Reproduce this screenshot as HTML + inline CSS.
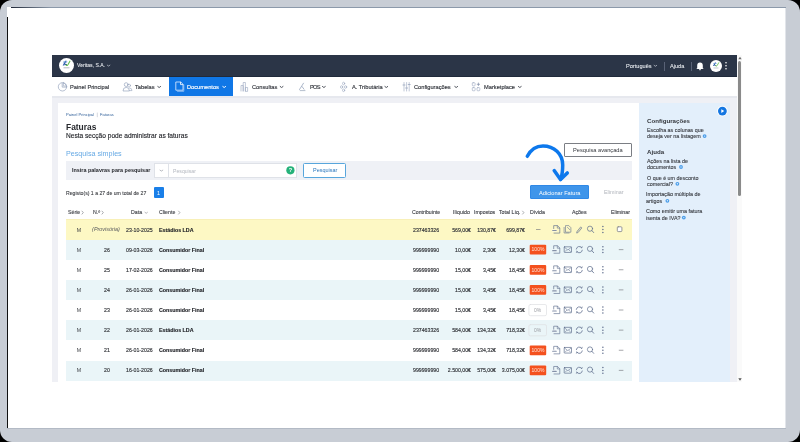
<!DOCTYPE html>
<html><head><meta charset="utf-8">
<style>
*{margin:0;padding:0;box-sizing:border-box}
html,body{width:800px;height:442px;overflow:hidden;background:#000}
body{font-family:"Liberation Sans",sans-serif;position:relative}
.a{position:absolute;white-space:nowrap}
.t{line-height:1;will-change:transform}
svg{position:absolute;left:0;top:0}
</style></head><body>
<div class="a" style="left:0;top:0;width:800px;height:442px;background:#c8cdd5;border-radius:12px"></div>
<div class="a" style="left:7px;top:7px;width:779px;height:422px;background:#fff;border-bottom:1px solid #b3bac5"></div>
<div class="a" style="left:7px;top:17px;width:1px;height:411px;background:#111"></div>
<div class="a" style="left:11px;top:7px;width:775px;height:1px;background:linear-gradient(90deg,#222a3a,#8c99aa 40px)"></div>
<div class="a" style="left:785px;top:8px;width:1px;height:420px;background:#e2e5ea"></div>
<div class="a" style="left:52px;top:55px;width:685px;height:22px;background:#2b3547"></div>
<div class="a" style="left:52px;top:76px;width:685px;height:1px;background:#202a3b"></div>
<div class="a" style="left:52px;top:77px;width:685px;height:19px;background:#fff"></div>
<div class="a" style="left:52px;top:96px;width:685px;height:286px;background:#eff0f5"></div>
<div class="a" style="left:52px;top:96px;width:685px;height:2px;background:#e6e8ee"></div>
<div class="a" style="left:58px;top:103px;width:581px;height:279px;background:#fff"></div>
<div class="a" style="left:639px;top:103px;width:91px;height:279px;background:#e3effb"></div>
<div class="a" style="left:737px;top:55px;width:5px;height:327px;background:#fafafa"></div>
<div class="a" style="left:738px;top:61px;width:3px;height:135px;background:#8a8a8a;border-radius:2px"></div>
<!-- nav active -->
<div class="a" style="left:169px;top:77px;width:64px;height:19px;background:#1077e6"></div>
<!-- header circles -->
<div class="a" style="left:59px;top:57.7px;width:15px;height:15px;border-radius:50%;background:#fff"></div>
<div class="a" style="left:710px;top:60px;width:12px;height:12px;border-radius:50%;background:#fff"></div>
<div class="a" style="left:663.5px;top:61.5px;width:1px;height:9px;background:#596276"></div>
<div class="a" style="left:690.5px;top:61.5px;width:1px;height:9px;background:#596276"></div>
<!-- search bar -->
<div class="a" style="left:66px;top:161px;width:566px;height:18.7px;background:#eff1f6"></div>
<div class="a" style="left:154.4px;top:163.4px;width:14px;height:14.2px;background:#fff;border:1px solid #dfe2e8;border-right:none"></div>
<div class="a" style="left:168.4px;top:163.4px;width:129px;height:14.2px;background:#fff;border:1px solid #dfe2e8"></div>
<div class="a" style="left:303px;top:163.2px;width:43.3px;height:14.5px;background:#fff;border:1px solid #58a6dc;border-radius:1.5px"></div>
<div class="a" style="left:564.3px;top:143.1px;width:67.8px;height:14.3px;background:#fff;border:1px solid #7b7e84;border-radius:1px"></div>
<div class="a" style="left:153.5px;top:187.4px;width:10.3px;height:11.1px;background:#1a7fe8;border-radius:1px"></div>
<div class="a" style="left:530px;top:185.4px;width:59px;height:13.8px;background:#3f95ea;border:1px solid #2f88e6;border-radius:1px"></div>
<!-- table rows -->
<div class="a" style="left:66px;top:219px;width:566px;height:20.5px;background:#fdf8c4;border-top:1px solid #f8f0b8"></div>
<div class="a" style="left:66px;top:239.5px;width:566px;height:20.1px;background:#eaf5f8"></div>
<div class="a" style="left:66px;top:280px;width:566px;height:20.1px;background:#eaf5f8"></div>
<div class="a" style="left:66px;top:320.2px;width:566px;height:20.1px;background:#eaf5f8"></div>
<div class="a" style="left:66px;top:360.5px;width:566px;height:20.1px;background:#eaf5f8"></div>

<div class="a t" id="h1" style="left:76.60px;top:63.10px;font-size:5.133px;color:#eef1f5;-webkit-text-stroke:0.05px #eef1f5">Veritas, S.A.</div>
<div class="a t" id="h2" style="left:625.60px;top:64.17px;font-size:5.617px;color:#eef1f5;-webkit-text-stroke:0.05px #eef1f5">Português</div>
<div class="a t" id="h3" style="left:669.70px;top:64.17px;font-size:5.617px;color:#eef1f5;-webkit-text-stroke:0.05px #eef1f5">Ajuda</div>
<div class="a t" id="n1" style="left:70.20px;top:84.73px;font-size:5.696px;color:#33363d;-webkit-text-stroke:0.15px #33363d">Painel Principal</div>
<div class="a t" id="n2" style="left:135.00px;top:84.73px;font-size:5.696px;color:#33363d;-webkit-text-stroke:0.15px #33363d">Tabelas</div>
<div class="a t" id="n3" style="left:187.00px;top:84.73px;font-size:5.696px;color:#fff;-webkit-text-stroke:0.15px #fff">Documentos</div>
<div class="a t" id="n4" style="left:251.90px;top:84.73px;font-size:5.696px;color:#33363d;-webkit-text-stroke:0.15px #33363d">Consultas</div>
<div class="a t" id="n5" style="left:309.60px;top:84.73px;font-size:5.696px;color:#33363d;-webkit-text-stroke:0.15px #33363d;letter-spacing:-0.75px">POS</div>
<div class="a t" id="n6" style="left:351.60px;top:84.73px;font-size:5.696px;color:#33363d;-webkit-text-stroke:0.15px #33363d">A. Tributária</div>
<div class="a t" id="n7" style="left:414.30px;top:84.73px;font-size:5.696px;color:#33363d;-webkit-text-stroke:0.15px #33363d">Configurações</div>
<div class="a t" id="n8" style="left:484.00px;top:84.73px;font-size:5.696px;color:#33363d;-webkit-text-stroke:0.15px #33363d">Marketplace</div>
<div class="a t" id="b1" style="left:66.10px;top:112.72px;font-size:4.079px;color:#2f5f99">Painel Principal</div>
<div class="a t" id="b2" style="left:100.30px;top:112.73px;font-size:4.052px;color:#2f5f99">Faturas</div>
<div class="a t" id="t1" style="left:66.10px;top:122.71px;font-size:8.404px;color:#26282d;font-weight:bold">Faturas</div>
<div class="a t" id="t2" style="left:66.10px;top:133.49px;font-size:6.606px;color:#202227;-webkit-text-stroke:0.12px #202227">Nesta secção pode administrar as faturas</div>
<div class="a t" id="ps" style="left:66.40px;top:150.71px;font-size:7.169px;color:#66a9e4">Pesquisa simples</div>
<div class="a t" id="s1" style="left:71.90px;top:168.45px;font-size:5.446px;color:#25272c;font-weight:bold">Insira palavras para pesquisar</div>
<div class="a t" id="s2" style="left:173.10px;top:168.59px;font-size:5.165px;color:#b3b7bf">Pesquisar</div>
<div class="a t" id="s3" style="left:312.70px;top:168.43px;font-size:5.488px;color:#2a76bd">Pesquisar</div>
<div class="a t" id="pa" style="left:573.20px;top:148.43px;font-size:5.695px;color:#33363c">Pesquisa avançada</div>
<div class="a t" id="rg" style="left:65.90px;top:191.19px;font-size:5.150px;color:#3e4045;-webkit-text-stroke:0.1px #3e4045">Registo(s) 1 a 27 de um total de 27</div>
<div class="a t" id="pg" style="left:157.30px;top:191.07px;font-size:5.404px;color:#fff">1</div>
<div class="a t" id="af" style="left:539.00px;top:190.64px;font-size:5.679px;color:#fff">Adicionar Fatura</div>
<div class="a t" id="el" style="left:603.70px;top:190.37px;font-size:5.409px;color:#b0b4bb">Eliminar</div>
<div class="a t" id="th1" style="left:67.50px;top:210.35px;font-size:5.241px;color:#3c3e44;-webkit-text-stroke:0.12px #3c3e44">Série</div>
<div class="a t" id="th2" style="left:92.70px;top:210.35px;font-size:5.241px;color:#3c3e44;-webkit-text-stroke:0.12px #3c3e44">N.º</div>
<div class="a t" id="th3" style="left:131.00px;top:210.35px;font-size:5.241px;color:#3c3e44;-webkit-text-stroke:0.12px #3c3e44">Data</div>
<div class="a t" id="th4" style="left:159.00px;top:210.35px;font-size:5.241px;color:#3c3e44;-webkit-text-stroke:0.12px #3c3e44">Cliente</div>
<div class="a t" id="th5" style="left:411.70px;top:210.35px;font-size:5.241px;color:#3c3e44;-webkit-text-stroke:0.12px #3c3e44">Contribuinte</div>
<div class="a t" id="th6" style="left:453.10px;top:210.35px;font-size:5.241px;color:#3c3e44;-webkit-text-stroke:0.12px #3c3e44">Ilíquido</div>
<div class="a t" id="th7" style="left:473.80px;top:210.35px;font-size:5.241px;color:#3c3e44;-webkit-text-stroke:0.12px #3c3e44">Impostos</div>
<div class="a t" id="th8" style="left:499.00px;top:210.35px;font-size:5.241px;color:#3c3e44;-webkit-text-stroke:0.12px #3c3e44">Total Líq.</div>
<div class="a t" id="th9" style="left:529.80px;top:210.35px;font-size:5.241px;color:#3c3e44;-webkit-text-stroke:0.12px #3c3e44">Dívida</div>
<div class="a t" id="th10" style="left:572.30px;top:210.35px;font-size:5.241px;color:#3c3e44;-webkit-text-stroke:0.12px #3c3e44">Ações</div>
<div class="a t" id="th11" style="left:611.30px;top:210.35px;font-size:5.241px;color:#3c3e44;-webkit-text-stroke:0.12px #3c3e44">Eliminar</div>
<div class="a t" id="c1" style="left:646.80px;top:117.66px;font-size:6.154px;color:#33363c;font-weight:bold">Configurações</div>
<div class="a t" id="c2" style="left:646.50px;top:128.48px;font-size:5.383px;color:#35383e;-webkit-text-stroke:0.1px #35383e">Escolha as colunas que</div>
<div class="a t" id="c3" style="left:646.50px;top:134.38px;font-size:5.383px;color:#35383e;-webkit-text-stroke:0.1px #35383e">deseja ver na listagem</div>
<div class="a t" id="a1" style="left:646.60px;top:148.81px;font-size:6.154px;color:#33363c;font-weight:bold">Ajuda</div>
<div class="a t" id="a2" style="left:646.50px;top:159.08px;font-size:5.383px;color:#35383e;-webkit-text-stroke:0.1px #35383e">Ações na lista de</div>
<div class="a t" id="a3" style="left:646.50px;top:165.28px;font-size:5.383px;color:#35383e;-webkit-text-stroke:0.1px #35383e">documentos</div>
<div class="a t" id="a4" style="left:646.50px;top:175.88px;font-size:5.383px;color:#35383e;-webkit-text-stroke:0.1px #35383e">O que é um desconto</div>
<div class="a t" id="a5" style="left:646.50px;top:182.08px;font-size:5.383px;color:#35383e;-webkit-text-stroke:0.1px #35383e">comercial?</div>
<div class="a t" id="a6" style="left:646.40px;top:192.38px;font-size:5.383px;color:#35383e;-webkit-text-stroke:0.1px #35383e">Importação múltipla de</div>
<div class="a t" id="a7" style="left:646.40px;top:199.08px;font-size:5.383px;color:#35383e;-webkit-text-stroke:0.1px #35383e">artigos</div>
<div class="a t" id="a8" style="left:646.40px;top:209.28px;font-size:5.383px;color:#35383e;-webkit-text-stroke:0.1px #35383e">Como emitir uma fatura</div>
<div class="a t" id="a9" style="left:646.40px;top:215.98px;font-size:5.383px;color:#35383e;-webkit-text-stroke:0.1px #35383e">isenta de IVA?</div>
<div class="a t" id="r0m" style="left:38.72px;width:80px;text-align:center;top:227.55px;font-size:5.239px;color:#3a3c41">M</div>
<div class="a t" id="r0n" style="left:66.38px;width:80px;text-align:center;top:227.45px;font-size:5.445px;color:#55575c;font-style:italic">(Provisória)</div>
<div class="a t" id="r0d" style="left:125.90px;top:227.55px;font-size:5.239px;color:#2f3136;-webkit-text-stroke:0.14px #2f3136">23-10-2025</div>
<div class="a t" id="r0c" style="left:158.70px;top:227.51px;font-size:5.329px;color:#1b1d22;font-weight:bold;-webkit-text-stroke:0.12px #1b1d22">Estádios LDA</div>
<div class="a t" id="r0t" style="left:413.40px;top:227.55px;font-size:5.239px;color:#2f3136;-webkit-text-stroke:0.14px #2f3136">237463326</div>
<div class="a t" id="r0v1" style="left:390.60px;width:80px;text-align:right;top:227.55px;font-size:5.239px;color:#2f3136;-webkit-text-stroke:0.14px #2f3136">569,00€</div>
<div class="a t" id="r0v2" style="left:415.50px;width:80px;text-align:right;top:227.55px;font-size:5.239px;color:#2f3136;-webkit-text-stroke:0.14px #2f3136">130,87€</div>
<div class="a t" id="r0v3" style="left:445.20px;width:80px;text-align:right;top:227.55px;font-size:5.239px;color:#2f3136;-webkit-text-stroke:0.14px #2f3136">699,87€</div>
<div class="a t" id="r1m" style="left:38.72px;width:80px;text-align:center;top:247.68px;font-size:5.239px;color:#3a3c41">M</div>
<div class="a t" id="r1n" style="left:66.50px;width:80px;text-align:center;top:247.68px;font-size:5.239px;color:#2f3136;-webkit-text-stroke:0.14px #2f3136">26</div>
<div class="a t" id="r1d" style="left:125.90px;top:247.68px;font-size:5.239px;color:#2f3136;-webkit-text-stroke:0.14px #2f3136">09-03-2026</div>
<div class="a t" id="r1c" style="left:158.70px;top:247.63px;font-size:5.329px;color:#1b1d22;font-weight:bold;-webkit-text-stroke:0.12px #1b1d22">Consumidor Final</div>
<div class="a t" id="r1t" style="left:413.40px;top:247.68px;font-size:5.239px;color:#2f3136;-webkit-text-stroke:0.14px #2f3136">999999990</div>
<div class="a t" id="r1v1" style="left:390.60px;width:80px;text-align:right;top:247.68px;font-size:5.239px;color:#2f3136;-webkit-text-stroke:0.14px #2f3136">10,00€</div>
<div class="a t" id="r1v2" style="left:415.50px;width:80px;text-align:right;top:247.68px;font-size:5.239px;color:#2f3136;-webkit-text-stroke:0.14px #2f3136">2,30€</div>
<div class="a t" id="r1v3" style="left:445.20px;width:80px;text-align:right;top:247.68px;font-size:5.239px;color:#2f3136;-webkit-text-stroke:0.14px #2f3136">12,30€</div>
<div class="a t" id="r2m" style="left:38.72px;width:80px;text-align:center;top:267.80px;font-size:5.239px;color:#3a3c41">M</div>
<div class="a t" id="r2n" style="left:66.50px;width:80px;text-align:center;top:267.80px;font-size:5.239px;color:#2f3136;-webkit-text-stroke:0.14px #2f3136">25</div>
<div class="a t" id="r2d" style="left:125.90px;top:267.80px;font-size:5.239px;color:#2f3136;-webkit-text-stroke:0.14px #2f3136">17-02-2026</div>
<div class="a t" id="r2c" style="left:158.70px;top:267.76px;font-size:5.329px;color:#1b1d22;font-weight:bold;-webkit-text-stroke:0.12px #1b1d22">Consumidor Final</div>
<div class="a t" id="r2t" style="left:413.40px;top:267.80px;font-size:5.239px;color:#2f3136;-webkit-text-stroke:0.14px #2f3136">999999990</div>
<div class="a t" id="r2v1" style="left:390.60px;width:80px;text-align:right;top:267.80px;font-size:5.239px;color:#2f3136;-webkit-text-stroke:0.14px #2f3136">15,00€</div>
<div class="a t" id="r2v2" style="left:415.50px;width:80px;text-align:right;top:267.80px;font-size:5.239px;color:#2f3136;-webkit-text-stroke:0.14px #2f3136">3,45€</div>
<div class="a t" id="r2v3" style="left:445.20px;width:80px;text-align:right;top:267.80px;font-size:5.239px;color:#2f3136;-webkit-text-stroke:0.14px #2f3136">18,45€</div>
<div class="a t" id="r3m" style="left:38.72px;width:80px;text-align:center;top:287.93px;font-size:5.239px;color:#3a3c41">M</div>
<div class="a t" id="r3n" style="left:66.50px;width:80px;text-align:center;top:287.93px;font-size:5.239px;color:#2f3136;-webkit-text-stroke:0.14px #2f3136">24</div>
<div class="a t" id="r3d" style="left:125.90px;top:287.93px;font-size:5.239px;color:#2f3136;-webkit-text-stroke:0.14px #2f3136">26-01-2026</div>
<div class="a t" id="r3c" style="left:158.70px;top:287.88px;font-size:5.329px;color:#1b1d22;font-weight:bold;-webkit-text-stroke:0.12px #1b1d22">Consumidor Final</div>
<div class="a t" id="r3t" style="left:413.40px;top:287.93px;font-size:5.239px;color:#2f3136;-webkit-text-stroke:0.14px #2f3136">999999990</div>
<div class="a t" id="r3v1" style="left:390.60px;width:80px;text-align:right;top:287.93px;font-size:5.239px;color:#2f3136;-webkit-text-stroke:0.14px #2f3136">15,00€</div>
<div class="a t" id="r3v2" style="left:415.50px;width:80px;text-align:right;top:287.93px;font-size:5.239px;color:#2f3136;-webkit-text-stroke:0.14px #2f3136">3,45€</div>
<div class="a t" id="r3v3" style="left:445.20px;width:80px;text-align:right;top:287.93px;font-size:5.239px;color:#2f3136;-webkit-text-stroke:0.14px #2f3136">18,45€</div>
<div class="a t" id="r4m" style="left:38.72px;width:80px;text-align:center;top:308.05px;font-size:5.239px;color:#3a3c41">M</div>
<div class="a t" id="r4n" style="left:66.50px;width:80px;text-align:center;top:308.05px;font-size:5.239px;color:#2f3136;-webkit-text-stroke:0.14px #2f3136">23</div>
<div class="a t" id="r4d" style="left:125.90px;top:308.05px;font-size:5.239px;color:#2f3136;-webkit-text-stroke:0.14px #2f3136">26-01-2026</div>
<div class="a t" id="r4c" style="left:158.70px;top:308.01px;font-size:5.329px;color:#1b1d22;font-weight:bold;-webkit-text-stroke:0.12px #1b1d22">Consumidor Final</div>
<div class="a t" id="r4t" style="left:413.40px;top:308.05px;font-size:5.239px;color:#2f3136;-webkit-text-stroke:0.14px #2f3136">999999990</div>
<div class="a t" id="r4v1" style="left:390.60px;width:80px;text-align:right;top:308.05px;font-size:5.239px;color:#2f3136;-webkit-text-stroke:0.14px #2f3136">15,00€</div>
<div class="a t" id="r4v2" style="left:415.50px;width:80px;text-align:right;top:308.05px;font-size:5.239px;color:#2f3136;-webkit-text-stroke:0.14px #2f3136">3,45€</div>
<div class="a t" id="r4v3" style="left:445.20px;width:80px;text-align:right;top:308.05px;font-size:5.239px;color:#2f3136;-webkit-text-stroke:0.14px #2f3136">18,45€</div>
<div class="a t" id="r5m" style="left:38.72px;width:80px;text-align:center;top:328.18px;font-size:5.239px;color:#3a3c41">M</div>
<div class="a t" id="r5n" style="left:66.50px;width:80px;text-align:center;top:328.18px;font-size:5.239px;color:#2f3136;-webkit-text-stroke:0.14px #2f3136">22</div>
<div class="a t" id="r5d" style="left:125.90px;top:328.18px;font-size:5.239px;color:#2f3136;-webkit-text-stroke:0.14px #2f3136">26-01-2026</div>
<div class="a t" id="r5c" style="left:158.70px;top:328.13px;font-size:5.329px;color:#1b1d22;font-weight:bold;-webkit-text-stroke:0.12px #1b1d22">Estádios LDA</div>
<div class="a t" id="r5t" style="left:413.40px;top:328.18px;font-size:5.239px;color:#2f3136;-webkit-text-stroke:0.14px #2f3136">237463326</div>
<div class="a t" id="r5v1" style="left:390.60px;width:80px;text-align:right;top:328.18px;font-size:5.239px;color:#2f3136;-webkit-text-stroke:0.14px #2f3136">584,00€</div>
<div class="a t" id="r5v2" style="left:415.50px;width:80px;text-align:right;top:328.18px;font-size:5.239px;color:#2f3136;-webkit-text-stroke:0.14px #2f3136">134,32€</div>
<div class="a t" id="r5v3" style="left:445.20px;width:80px;text-align:right;top:328.18px;font-size:5.239px;color:#2f3136;-webkit-text-stroke:0.14px #2f3136">718,32€</div>
<div class="a t" id="r6m" style="left:38.72px;width:80px;text-align:center;top:348.30px;font-size:5.239px;color:#3a3c41">M</div>
<div class="a t" id="r6n" style="left:66.50px;width:80px;text-align:center;top:348.30px;font-size:5.239px;color:#2f3136;-webkit-text-stroke:0.14px #2f3136">21</div>
<div class="a t" id="r6d" style="left:125.90px;top:348.30px;font-size:5.239px;color:#2f3136;-webkit-text-stroke:0.14px #2f3136">26-01-2026</div>
<div class="a t" id="r6c" style="left:158.70px;top:348.26px;font-size:5.329px;color:#1b1d22;font-weight:bold;-webkit-text-stroke:0.12px #1b1d22">Consumidor Final</div>
<div class="a t" id="r6t" style="left:413.40px;top:348.30px;font-size:5.239px;color:#2f3136;-webkit-text-stroke:0.14px #2f3136">999999990</div>
<div class="a t" id="r6v1" style="left:390.60px;width:80px;text-align:right;top:348.30px;font-size:5.239px;color:#2f3136;-webkit-text-stroke:0.14px #2f3136">584,00€</div>
<div class="a t" id="r6v2" style="left:415.50px;width:80px;text-align:right;top:348.30px;font-size:5.239px;color:#2f3136;-webkit-text-stroke:0.14px #2f3136">134,32€</div>
<div class="a t" id="r6v3" style="left:445.20px;width:80px;text-align:right;top:348.30px;font-size:5.239px;color:#2f3136;-webkit-text-stroke:0.14px #2f3136">718,32€</div>
<div class="a t" id="r7m" style="left:38.72px;width:80px;text-align:center;top:368.43px;font-size:5.239px;color:#3a3c41">M</div>
<div class="a t" id="r7n" style="left:66.50px;width:80px;text-align:center;top:368.43px;font-size:5.239px;color:#2f3136;-webkit-text-stroke:0.14px #2f3136">20</div>
<div class="a t" id="r7d" style="left:125.90px;top:368.43px;font-size:5.239px;color:#2f3136;-webkit-text-stroke:0.14px #2f3136">16-01-2026</div>
<div class="a t" id="r7c" style="left:158.70px;top:368.38px;font-size:5.329px;color:#1b1d22;font-weight:bold;-webkit-text-stroke:0.12px #1b1d22">Consumidor Final</div>
<div class="a t" id="r7t" style="left:413.40px;top:368.43px;font-size:5.239px;color:#2f3136;-webkit-text-stroke:0.14px #2f3136">999999990</div>
<div class="a t" id="r7v1" style="left:390.60px;width:80px;text-align:right;top:368.43px;font-size:5.239px;color:#2f3136;-webkit-text-stroke:0.14px #2f3136">2.500,00€</div>
<div class="a t" id="r7v2" style="left:415.50px;width:80px;text-align:right;top:368.43px;font-size:5.239px;color:#2f3136;-webkit-text-stroke:0.14px #2f3136">575,00€</div>
<div class="a t" id="r7v3" style="left:445.20px;width:80px;text-align:right;top:368.43px;font-size:5.239px;color:#2f3136;-webkit-text-stroke:0.14px #2f3136">3.075,00€</div>
<svg width="800" height="442" viewBox="0 0 800 442" fill="none" stroke-linecap="round" stroke-linejoin="round">
<g transform="translate(66.5,65.2) scale(1.0)">
<path d="M-3.8,0.2 L-1.4,-4.4 L0.2,-4.4 L-2.2,0.2 Z" fill="#2e5fae"/>
<path d="M-3.2,-3.6 L0.9,-3.6 L0.5,-2.8 L-3.6,-2.8 Z" fill="#6b9ad6"/>
<path d="M-1.2,-1.2 L0.6,-1.2 L0.1,-0.2 L-1.7,-0.2 Z" fill="#2b4f8c"/>
<path d="M-0.4,0 Q0.6,0.8 1.4,-0.4 L3.4,-4" stroke="#66c04f" stroke-width="1.1"/>
<path d="M-2.6,2.6 L2.6,2.6" stroke="#b4bac4" stroke-width="1"/>
</g>
<g transform="translate(716,65.9) scale(0.8)">
<path d="M-3.8,0.2 L-1.4,-4.4 L0.2,-4.4 L-2.2,0.2 Z" fill="#2e5fae"/>
<path d="M-3.2,-3.6 L0.9,-3.6 L0.5,-2.8 L-3.6,-2.8 Z" fill="#6b9ad6"/>
<path d="M-1.2,-1.2 L0.6,-1.2 L0.1,-0.2 L-1.7,-0.2 Z" fill="#2b4f8c"/>
<path d="M-0.4,0 Q0.6,0.8 1.4,-0.4 L3.4,-4" stroke="#66c04f" stroke-width="1.1"/>
<path d="M-2.6,2.6 L2.6,2.6" stroke="#b4bac4" stroke-width="1"/>
</g>
<path d="M697.2,68.3 L697.2,65.6 Q697.2,62.6 700,62.6 Q702.8,62.6 702.8,65.6 L702.8,68.3 L703.8,69 L696.2,69 Z" fill="#fff"/>
<circle cx="700" cy="69.6" r="0.8" fill="#fff"/>
<circle cx="726" cy="62.8" r="0.8" fill="#fff"/>
<circle cx="726" cy="65.8" r="0.8" fill="#fff"/>
<circle cx="726" cy="68.8" r="0.8" fill="#fff"/>
<path d="M107.3,65.14999999999999 L108.6,66.05 L109.89999999999999,65.14999999999999" stroke="#c9ced8" stroke-width="0.7"/>
<path d="M654.1,65.35 L655.4,66.25 L656.6999999999999,65.35" stroke="#c9ced8" stroke-width="0.7"/>
<path d="M157.79999999999998,86.5 L159.2,87.5 L160.6,86.5" stroke="#4d515a" stroke-width="1.0"/>
<path d="M280.20000000000005,86.5 L281.6,87.5 L283.0,86.5" stroke="#4d515a" stroke-width="1.0"/>
<path d="M322.5,86.5 L323.9,87.5 L325.29999999999995,86.5" stroke="#4d515a" stroke-width="1.0"/>
<path d="M384.90000000000003,86.5 L386.3,87.5 L387.7,86.5" stroke="#4d515a" stroke-width="1.0"/>
<path d="M454.8,86.5 L456.2,87.5 L457.59999999999997,86.5" stroke="#4d515a" stroke-width="1.0"/>
<path d="M518.4,86.5 L519.8,87.5 L521.1999999999999,86.5" stroke="#4d515a" stroke-width="1.0"/>
<path d="M222.79999999999998,86.5 L224.2,87.5 L225.6,86.5" stroke="#ffffff" stroke-width="1.0"/>
<circle cx="62.5" cy="86.8" r="4.2" stroke="#97a5bd" stroke-width="0.7"/>
<path d="M62.2,83.3 L62.2,87.1 L66,87.1" stroke="#97a5bd" stroke-width="0.7"/>
<path d="M63.4,82.9 L63.4,86 L66.4,86 Q66.2,83.2 63.4,82.9 Z" stroke="#97a5bd" stroke-width="0.6"/>
<circle cx="126.2" cy="84.6" r="1.9" stroke="#97a5bd" stroke-width="0.7"/>
<path d="M123,90.6 Q123,87.4 126.2,87.4 Q129.4,87.4 129.4,90.6 Z" stroke="#97a5bd" stroke-width="0.7"/>
<circle cx="129" cy="85.6" r="1.5" stroke="#97a5bd" stroke-width="0.6"/>
<path d="M129.6,90.6 L132,90.6 Q132,88 129.6,88" stroke="#97a5bd" stroke-width="0.6"/>
<path d="M176.2,82 L180.8,82 L183,84.3 L183,90.2 L176.2,90.2 Z" stroke="#e3efff" stroke-width="0.8"/>
<path d="M180.5,82.2 L180.5,84.6 L182.8,84.6" stroke="#ffffff" stroke-width="0.8"/>
<path d="M177.5,91.3 L183.8,91.3 L183.8,85" stroke="#cfe3fb" stroke-width="0.6"/>
<path d="M241,91 L241,85.5 L243.2,85.5 L243.2,91 M243.2,91 L243.2,82.5 L245.4,82.5 L245.4,91 M245.4,91 L245.4,87.5 L247.6,87.5 L247.6,91 Z" stroke="#97a5bd" stroke-width="0.6"/>
<path d="M299.5,89.5 L303.5,83.2 M302,86.5 L304,89.2" stroke="#97a5bd" stroke-width="0.8"/>
<path d="M300.2,90.6 L305,90.6" stroke="#7887a3" stroke-width="0.55"/>
<ellipse cx="343.6" cy="83.5" rx="1.1" ry="1.3" stroke="#97a5bd" stroke-width="0.6"/>
<ellipse cx="341.6" cy="87" rx="1.1" ry="1.3" stroke="#97a5bd" stroke-width="0.6"/>
<ellipse cx="345.6" cy="87" rx="1.1" ry="1.3" stroke="#97a5bd" stroke-width="0.6"/>
<ellipse cx="343.6" cy="90.3" rx="1.1" ry="1.3" stroke="#97a5bd" stroke-width="0.6"/>
<path d="M404,82.5 L404,91 M406.6,82.5 L406.6,91 M409.2,82.5 L409.2,91" stroke="#97a5bd" stroke-width="0.6"/>
<path d="M403,85 L405,85 M405.6,88 L407.6,88 M408.2,84.5 L410.2,84.5" stroke="#97a5bd" stroke-width="0.8"/>
<rect x="472.3" y="82.7" width="2.8" height="3.2" rx="0.8" stroke="#97a5bd" stroke-width="0.6"/>
<rect x="472.3" y="87.6" width="2.8" height="3.2" rx="0.8" stroke="#97a5bd" stroke-width="0.6"/>
<rect x="477" y="87.6" width="2.8" height="3.2" rx="0.8" stroke="#97a5bd" stroke-width="0.6"/>
<path d="M478.4,83 L478.4,85.6 M477.2,84.3 L479.6,84.3" stroke="#7d8aa5" stroke-width="0.7"/>
<path d="M97.3,113 L97.3,116.8" stroke="#b9bec8" stroke-width="0.6"/>
<path d="M160.0,170.15 L161.4,171.04999999999998 L162.8,170.15" stroke="#8a8f99" stroke-width="0.6"/>
<circle cx="290.4" cy="170.3" r="4.1" fill="#25b27a"/>
<text x="290.4" y="172.4" font-family="Liberation Sans" font-size="5.6" font-weight="bold" fill="#fff" text-anchor="middle">?</text>
<path d="M527.3,156.3 C531,149 537,145.9 543,145.9 C554,145.9 562.7,154 562.7,165 C562.7,171 562,175.5 560.8,179" stroke="#0d78ec" stroke-width="3.5"/>
<path d="M554.2,170.6 L560.5,179.6 L567.3,172.9" stroke="#0d78ec" stroke-width="3.5"/>
<path d="M82.0,211.1 L83.3,212.6 L82.0,214.1" stroke="#7d8087" stroke-width="0.65"/>
<path d="M102.0,211.1 L103.3,212.6 L102.0,214.1" stroke="#7d8087" stroke-width="0.65"/>
<path d="M178.6,211.1 L179.89999999999998,212.6 L178.6,214.1" stroke="#7d8087" stroke-width="0.65"/>
<path d="M522.6,211.1 L523.9000000000001,212.6 L522.6,214.1" stroke="#7d8087" stroke-width="0.65"/>
<path d="M145.0,212.35000000000002 L146.2,213.25 L147.39999999999998,212.35000000000002" stroke="#7d8087" stroke-width="0.6"/>
<path d="M553.7,228.6 L553.7,225.6 L557.5,225.6 L559.8000000000001,227.9 L559.8000000000001,233.1 L554.0,233.1" stroke="#5f6e8d" stroke-width="0.65"/>
<path d="M557.3000000000001,225.79999999999998 L557.3000000000001,228.1 L559.6,228.1" stroke="#5f6e8d" stroke-width="0.6"/>
<rect x="552.2" y="229.29999999999998" width="4.6" height="2.3" fill="#fff" opacity="0.5"/>
<path d="M552.7,230.5 L556.4000000000001,230.5" stroke="#5f6e8d" stroke-width="1.2" stroke-dasharray="0.9 0.4" opacity="0.75"/>
<circle cx="590.0" cy="228.7" r="2.6" stroke="#5f6e8d" stroke-width="0.7"/>
<path d="M591.9,230.6 L593.7,232.6" stroke="#5f6e8d" stroke-width="0.8"/>
<circle cx="602.9" cy="226.6" r="0.75" fill="#5f6e8d"/>
<circle cx="602.9" cy="229.5" r="0.75" fill="#5f6e8d"/>
<circle cx="602.9" cy="232.4" r="0.75" fill="#5f6e8d"/>
<path d="M564.1,227.4 L564.1,233.0 L569.1,233.0" stroke="#5f6e8d" stroke-width="0.6"/>
<path d="M565.5,231.79999999999998 L565.5,225.6 L568.8,225.6 L570.9,227.7 L570.9,231.79999999999998 Z" stroke="#5f6e8d" stroke-width="0.6"/>
<path d="M567.5,227.4 L569.9,229.79999999999998" stroke="#5f6e8d" stroke-width="0.6"/>
<path d="M576.7,232.7 L577.1,231.3 L580.7,226.9 L581.9,227.9 L578.3000000000001,232.3 Z" stroke="#5f6e8d" stroke-width="0.6" fill="#5f6e8d" fill-opacity="0.2"/>
<path d="M536,229.5 L540.5,229.5" stroke="#77797f" stroke-width="0.65" stroke-linecap="butt"/>
<rect x="617.3" y="226.8" width="4.6" height="4.8" rx="0.9" fill="#fff" stroke="#7d7f85" stroke-width="0.8"/>
<path d="M553.7,248.725 L553.7,245.725 L557.5,245.725 L559.8000000000001,248.025 L559.8000000000001,253.225 L554.0,253.225" stroke="#5f6e8d" stroke-width="0.65"/>
<path d="M557.3000000000001,245.92499999999998 L557.3000000000001,248.225 L559.6,248.225" stroke="#5f6e8d" stroke-width="0.6"/>
<rect x="552.2" y="249.42499999999998" width="4.6" height="2.3" fill="#fff" opacity="0.5"/>
<path d="M552.7,250.625 L556.4000000000001,250.625" stroke="#5f6e8d" stroke-width="1.2" stroke-dasharray="0.9 0.4" opacity="0.75"/>
<circle cx="590.0" cy="248.825" r="2.6" stroke="#5f6e8d" stroke-width="0.7"/>
<path d="M591.9,250.725 L593.7,252.725" stroke="#5f6e8d" stroke-width="0.8"/>
<circle cx="602.9" cy="246.725" r="0.75" fill="#5f6e8d"/>
<circle cx="602.9" cy="249.625" r="0.75" fill="#5f6e8d"/>
<circle cx="602.9" cy="252.525" r="0.75" fill="#5f6e8d"/>
<rect x="564.2" y="246.825" width="7.3" height="5.6" rx="0.4" stroke="#5f6e8d" stroke-width="0.7"/>
<path d="M564.6,247.425 L567.85,250.025 L571.1,247.425 M565.2,251.425 L566.8000000000001,249.825 M570.5,251.425 L568.9000000000001,249.825" stroke="#5f6e8d" stroke-width="0.55"/>
<path d="M576.3,249.025 A3,3 0 0 1 581.6999999999999,247.725" stroke="#5f6e8d" stroke-width="0.75"/>
<path d="M582.3,250.225 A3,3 0 0 1 576.9,251.525" stroke="#5f6e8d" stroke-width="0.75"/>
<path d="M580.8,247.225 L581.9,247.925 L582.1999999999999,246.625" stroke="#5f6e8d" stroke-width="0.6"/>
<path d="M577.8,252.025 L576.6999999999999,251.325 L576.4,252.625" stroke="#5f6e8d" stroke-width="0.6"/>
<path d="M618.8,249.625 L623.4,249.625" stroke="#77797f" stroke-width="0.65" stroke-linecap="butt"/>
<path d="M553.7,268.85 L553.7,265.85 L557.5,265.85 L559.8000000000001,268.15000000000003 L559.8000000000001,273.35 L554.0,273.35" stroke="#5f6e8d" stroke-width="0.65"/>
<path d="M557.3000000000001,266.05 L557.3000000000001,268.35 L559.6,268.35" stroke="#5f6e8d" stroke-width="0.6"/>
<rect x="552.2" y="269.55" width="4.6" height="2.3" fill="#fff" opacity="0.5"/>
<path d="M552.7,270.75 L556.4000000000001,270.75" stroke="#5f6e8d" stroke-width="1.2" stroke-dasharray="0.9 0.4" opacity="0.75"/>
<circle cx="590.0" cy="268.95" r="2.6" stroke="#5f6e8d" stroke-width="0.7"/>
<path d="M591.9,270.85 L593.7,272.85" stroke="#5f6e8d" stroke-width="0.8"/>
<circle cx="602.9" cy="266.85" r="0.75" fill="#5f6e8d"/>
<circle cx="602.9" cy="269.75" r="0.75" fill="#5f6e8d"/>
<circle cx="602.9" cy="272.65" r="0.75" fill="#5f6e8d"/>
<rect x="564.2" y="266.95" width="7.3" height="5.6" rx="0.4" stroke="#5f6e8d" stroke-width="0.7"/>
<path d="M564.6,267.55 L567.85,270.15 L571.1,267.55 M565.2,271.55 L566.8000000000001,269.95 M570.5,271.55 L568.9000000000001,269.95" stroke="#5f6e8d" stroke-width="0.55"/>
<path d="M576.3,269.15 A3,3 0 0 1 581.6999999999999,267.85" stroke="#5f6e8d" stroke-width="0.75"/>
<path d="M582.3,270.35 A3,3 0 0 1 576.9,271.65" stroke="#5f6e8d" stroke-width="0.75"/>
<path d="M580.8,267.35 L581.9,268.05 L582.1999999999999,266.75" stroke="#5f6e8d" stroke-width="0.6"/>
<path d="M577.8,272.15 L576.6999999999999,271.45 L576.4,272.75" stroke="#5f6e8d" stroke-width="0.6"/>
<path d="M618.8,269.75 L623.4,269.75" stroke="#77797f" stroke-width="0.65" stroke-linecap="butt"/>
<path d="M553.7,288.975 L553.7,285.975 L557.5,285.975 L559.8000000000001,288.27500000000003 L559.8000000000001,293.475 L554.0,293.475" stroke="#5f6e8d" stroke-width="0.65"/>
<path d="M557.3000000000001,286.175 L557.3000000000001,288.475 L559.6,288.475" stroke="#5f6e8d" stroke-width="0.6"/>
<rect x="552.2" y="289.675" width="4.6" height="2.3" fill="#fff" opacity="0.5"/>
<path d="M552.7,290.875 L556.4000000000001,290.875" stroke="#5f6e8d" stroke-width="1.2" stroke-dasharray="0.9 0.4" opacity="0.75"/>
<circle cx="590.0" cy="289.075" r="2.6" stroke="#5f6e8d" stroke-width="0.7"/>
<path d="M591.9,290.975 L593.7,292.975" stroke="#5f6e8d" stroke-width="0.8"/>
<circle cx="602.9" cy="286.975" r="0.75" fill="#5f6e8d"/>
<circle cx="602.9" cy="289.875" r="0.75" fill="#5f6e8d"/>
<circle cx="602.9" cy="292.775" r="0.75" fill="#5f6e8d"/>
<rect x="564.2" y="287.075" width="7.3" height="5.6" rx="0.4" stroke="#5f6e8d" stroke-width="0.7"/>
<path d="M564.6,287.675 L567.85,290.275 L571.1,287.675 M565.2,291.675 L566.8000000000001,290.075 M570.5,291.675 L568.9000000000001,290.075" stroke="#5f6e8d" stroke-width="0.55"/>
<path d="M576.3,289.275 A3,3 0 0 1 581.6999999999999,287.975" stroke="#5f6e8d" stroke-width="0.75"/>
<path d="M582.3,290.475 A3,3 0 0 1 576.9,291.775" stroke="#5f6e8d" stroke-width="0.75"/>
<path d="M580.8,287.475 L581.9,288.175 L582.1999999999999,286.875" stroke="#5f6e8d" stroke-width="0.6"/>
<path d="M577.8,292.275 L576.6999999999999,291.575 L576.4,292.875" stroke="#5f6e8d" stroke-width="0.6"/>
<path d="M618.8,289.875 L623.4,289.875" stroke="#77797f" stroke-width="0.65" stroke-linecap="butt"/>
<path d="M553.7,309.1 L553.7,306.1 L557.5,306.1 L559.8000000000001,308.40000000000003 L559.8000000000001,313.6 L554.0,313.6" stroke="#5f6e8d" stroke-width="0.65"/>
<path d="M557.3000000000001,306.3 L557.3000000000001,308.6 L559.6,308.6" stroke="#5f6e8d" stroke-width="0.6"/>
<rect x="552.2" y="309.8" width="4.6" height="2.3" fill="#fff" opacity="0.5"/>
<path d="M552.7,311.0 L556.4000000000001,311.0" stroke="#5f6e8d" stroke-width="1.2" stroke-dasharray="0.9 0.4" opacity="0.75"/>
<circle cx="590.0" cy="309.2" r="2.6" stroke="#5f6e8d" stroke-width="0.7"/>
<path d="M591.9,311.1 L593.7,313.1" stroke="#5f6e8d" stroke-width="0.8"/>
<circle cx="602.9" cy="307.1" r="0.75" fill="#5f6e8d"/>
<circle cx="602.9" cy="310.0" r="0.75" fill="#5f6e8d"/>
<circle cx="602.9" cy="312.9" r="0.75" fill="#5f6e8d"/>
<rect x="564.2" y="307.2" width="7.3" height="5.6" rx="0.4" stroke="#5f6e8d" stroke-width="0.7"/>
<path d="M564.6,307.8 L567.85,310.4 L571.1,307.8 M565.2,311.8 L566.8000000000001,310.2 M570.5,311.8 L568.9000000000001,310.2" stroke="#5f6e8d" stroke-width="0.55"/>
<path d="M576.3,309.4 A3,3 0 0 1 581.6999999999999,308.1" stroke="#5f6e8d" stroke-width="0.75"/>
<path d="M582.3,310.6 A3,3 0 0 1 576.9,311.9" stroke="#5f6e8d" stroke-width="0.75"/>
<path d="M580.8,307.6 L581.9,308.3 L582.1999999999999,307.0" stroke="#5f6e8d" stroke-width="0.6"/>
<path d="M577.8,312.4 L576.6999999999999,311.7 L576.4,313.0" stroke="#5f6e8d" stroke-width="0.6"/>
<path d="M618.8,310.0 L623.4,310.0" stroke="#77797f" stroke-width="0.65" stroke-linecap="butt"/>
<path d="M553.7,329.225 L553.7,326.225 L557.5,326.225 L559.8000000000001,328.52500000000003 L559.8000000000001,333.725 L554.0,333.725" stroke="#5f6e8d" stroke-width="0.65"/>
<path d="M557.3000000000001,326.425 L557.3000000000001,328.725 L559.6,328.725" stroke="#5f6e8d" stroke-width="0.6"/>
<rect x="552.2" y="329.925" width="4.6" height="2.3" fill="#fff" opacity="0.5"/>
<path d="M552.7,331.125 L556.4000000000001,331.125" stroke="#5f6e8d" stroke-width="1.2" stroke-dasharray="0.9 0.4" opacity="0.75"/>
<circle cx="590.0" cy="329.325" r="2.6" stroke="#5f6e8d" stroke-width="0.7"/>
<path d="M591.9,331.225 L593.7,333.225" stroke="#5f6e8d" stroke-width="0.8"/>
<circle cx="602.9" cy="327.225" r="0.75" fill="#5f6e8d"/>
<circle cx="602.9" cy="330.125" r="0.75" fill="#5f6e8d"/>
<circle cx="602.9" cy="333.025" r="0.75" fill="#5f6e8d"/>
<rect x="564.2" y="327.325" width="7.3" height="5.6" rx="0.4" stroke="#5f6e8d" stroke-width="0.7"/>
<path d="M564.6,327.925 L567.85,330.525 L571.1,327.925 M565.2,331.925 L566.8000000000001,330.325 M570.5,331.925 L568.9000000000001,330.325" stroke="#5f6e8d" stroke-width="0.55"/>
<path d="M576.3,329.525 A3,3 0 0 1 581.6999999999999,328.225" stroke="#5f6e8d" stroke-width="0.75"/>
<path d="M582.3,330.725 A3,3 0 0 1 576.9,332.025" stroke="#5f6e8d" stroke-width="0.75"/>
<path d="M580.8,327.725 L581.9,328.425 L582.1999999999999,327.125" stroke="#5f6e8d" stroke-width="0.6"/>
<path d="M577.8,332.525 L576.6999999999999,331.825 L576.4,333.125" stroke="#5f6e8d" stroke-width="0.6"/>
<path d="M618.8,330.125 L623.4,330.125" stroke="#77797f" stroke-width="0.65" stroke-linecap="butt"/>
<path d="M553.7,349.35 L553.7,346.35 L557.5,346.35 L559.8000000000001,348.65000000000003 L559.8000000000001,353.85 L554.0,353.85" stroke="#5f6e8d" stroke-width="0.65"/>
<path d="M557.3000000000001,346.55 L557.3000000000001,348.85 L559.6,348.85" stroke="#5f6e8d" stroke-width="0.6"/>
<rect x="552.2" y="350.05" width="4.6" height="2.3" fill="#fff" opacity="0.5"/>
<path d="M552.7,351.25 L556.4000000000001,351.25" stroke="#5f6e8d" stroke-width="1.2" stroke-dasharray="0.9 0.4" opacity="0.75"/>
<circle cx="590.0" cy="349.45" r="2.6" stroke="#5f6e8d" stroke-width="0.7"/>
<path d="M591.9,351.35 L593.7,353.35" stroke="#5f6e8d" stroke-width="0.8"/>
<circle cx="602.9" cy="347.35" r="0.75" fill="#5f6e8d"/>
<circle cx="602.9" cy="350.25" r="0.75" fill="#5f6e8d"/>
<circle cx="602.9" cy="353.15" r="0.75" fill="#5f6e8d"/>
<rect x="564.2" y="347.45" width="7.3" height="5.6" rx="0.4" stroke="#5f6e8d" stroke-width="0.7"/>
<path d="M564.6,348.05 L567.85,350.65 L571.1,348.05 M565.2,352.05 L566.8000000000001,350.45 M570.5,352.05 L568.9000000000001,350.45" stroke="#5f6e8d" stroke-width="0.55"/>
<path d="M576.3,349.65 A3,3 0 0 1 581.6999999999999,348.35" stroke="#5f6e8d" stroke-width="0.75"/>
<path d="M582.3,350.85 A3,3 0 0 1 576.9,352.15" stroke="#5f6e8d" stroke-width="0.75"/>
<path d="M580.8,347.85 L581.9,348.55 L582.1999999999999,347.25" stroke="#5f6e8d" stroke-width="0.6"/>
<path d="M577.8,352.65 L576.6999999999999,351.95 L576.4,353.25" stroke="#5f6e8d" stroke-width="0.6"/>
<path d="M618.8,350.25 L623.4,350.25" stroke="#77797f" stroke-width="0.65" stroke-linecap="butt"/>
<path d="M553.7,369.475 L553.7,366.475 L557.5,366.475 L559.8000000000001,368.77500000000003 L559.8000000000001,373.975 L554.0,373.975" stroke="#5f6e8d" stroke-width="0.65"/>
<path d="M557.3000000000001,366.675 L557.3000000000001,368.975 L559.6,368.975" stroke="#5f6e8d" stroke-width="0.6"/>
<rect x="552.2" y="370.175" width="4.6" height="2.3" fill="#fff" opacity="0.5"/>
<path d="M552.7,371.375 L556.4000000000001,371.375" stroke="#5f6e8d" stroke-width="1.2" stroke-dasharray="0.9 0.4" opacity="0.75"/>
<circle cx="590.0" cy="369.575" r="2.6" stroke="#5f6e8d" stroke-width="0.7"/>
<path d="M591.9,371.475 L593.7,373.475" stroke="#5f6e8d" stroke-width="0.8"/>
<circle cx="602.9" cy="367.475" r="0.75" fill="#5f6e8d"/>
<circle cx="602.9" cy="370.375" r="0.75" fill="#5f6e8d"/>
<circle cx="602.9" cy="373.275" r="0.75" fill="#5f6e8d"/>
<rect x="564.2" y="367.575" width="7.3" height="5.6" rx="0.4" stroke="#5f6e8d" stroke-width="0.7"/>
<path d="M564.6,368.175 L567.85,370.775 L571.1,368.175 M565.2,372.175 L566.8000000000001,370.575 M570.5,372.175 L568.9000000000001,370.575" stroke="#5f6e8d" stroke-width="0.55"/>
<path d="M576.3,369.775 A3,3 0 0 1 581.6999999999999,368.475" stroke="#5f6e8d" stroke-width="0.75"/>
<path d="M582.3,370.975 A3,3 0 0 1 576.9,372.275" stroke="#5f6e8d" stroke-width="0.75"/>
<path d="M580.8,367.975 L581.9,368.675 L582.1999999999999,367.375" stroke="#5f6e8d" stroke-width="0.6"/>
<path d="M577.8,372.775 L576.6999999999999,372.075 L576.4,373.375" stroke="#5f6e8d" stroke-width="0.6"/>
<path d="M618.8,370.375 L623.4,370.375" stroke="#77797f" stroke-width="0.65" stroke-linecap="butt"/>
<rect x="529.7" y="244.825" width="16.5" height="9.7" rx="1" fill="#f4511e"/>
<text x="538" y="251.425" font-family="Liberation Sans" font-size="5" fill="#ffe3d8" text-anchor="middle">100%</text>
<rect x="529.7" y="264.95" width="16.5" height="9.7" rx="1" fill="#f4511e"/>
<text x="538" y="271.55" font-family="Liberation Sans" font-size="5" fill="#ffe3d8" text-anchor="middle">100%</text>
<rect x="529.7" y="285.075" width="16.5" height="9.7" rx="1" fill="#f4511e"/>
<text x="538" y="291.675" font-family="Liberation Sans" font-size="5" fill="#ffe3d8" text-anchor="middle">100%</text>
<rect x="528.9" y="304.5" width="17.6" height="11.2" rx="1.5" fill="none" stroke="#dedfe3" stroke-width="0.7"/>
<text x="537.7" y="311.8" font-family="Liberation Sans" font-size="5" fill="#9a9ca2" text-anchor="middle">0%</text>
<rect x="528.9" y="324.625" width="17.6" height="11.2" rx="1.5" fill="none" stroke="#dedfe3" stroke-width="0.7"/>
<text x="537.7" y="331.925" font-family="Liberation Sans" font-size="5" fill="#9a9ca2" text-anchor="middle">0%</text>
<rect x="529.7" y="345.45" width="16.5" height="9.7" rx="1" fill="#f4511e"/>
<text x="538" y="352.05" font-family="Liberation Sans" font-size="5" fill="#ffe3d8" text-anchor="middle">100%</text>
<rect x="529.7" y="365.575" width="16.5" height="9.7" rx="1" fill="#f4511e"/>
<text x="538" y="372.175" font-family="Liberation Sans" font-size="5" fill="#ffe3d8" text-anchor="middle">100%</text>
<circle cx="722.4" cy="111.1" r="5.3" fill="#fff"/>
<circle cx="722.4" cy="111.1" r="4.4" fill="#1376e2"/>
<path d="M721.3,109.2 L724.2,111.1 L721.3,113 Z" fill="#fff"/>
<circle cx="704.6" cy="136.1" r="1.9" fill="#4c9de8"/>
<circle cx="704.6" cy="136.1" r="0.7" fill="#d9ebfb"/>
<circle cx="681" cy="167" r="1.9" fill="#4c9de8"/>
<circle cx="681" cy="167" r="0.7" fill="#d9ebfb"/>
<circle cx="677.4" cy="183.8" r="1.9" fill="#4c9de8"/>
<circle cx="677.4" cy="183.8" r="0.7" fill="#d9ebfb"/>
<circle cx="667.4" cy="200.8" r="1.9" fill="#4c9de8"/>
<circle cx="667.4" cy="200.8" r="0.7" fill="#d9ebfb"/>
<circle cx="683.8" cy="217.6" r="1.9" fill="#4c9de8"/>
<circle cx="683.8" cy="217.6" r="0.7" fill="#d9ebfb"/>
<path d="M738.3,59.2 L741.7,59.2 L740,56.8 Z" fill="#6f6f6f"/>
<path d="M738.3,378.3 L741.7,378.3 L740,380.7 Z" fill="#555"/>
</svg>
</body></html>
